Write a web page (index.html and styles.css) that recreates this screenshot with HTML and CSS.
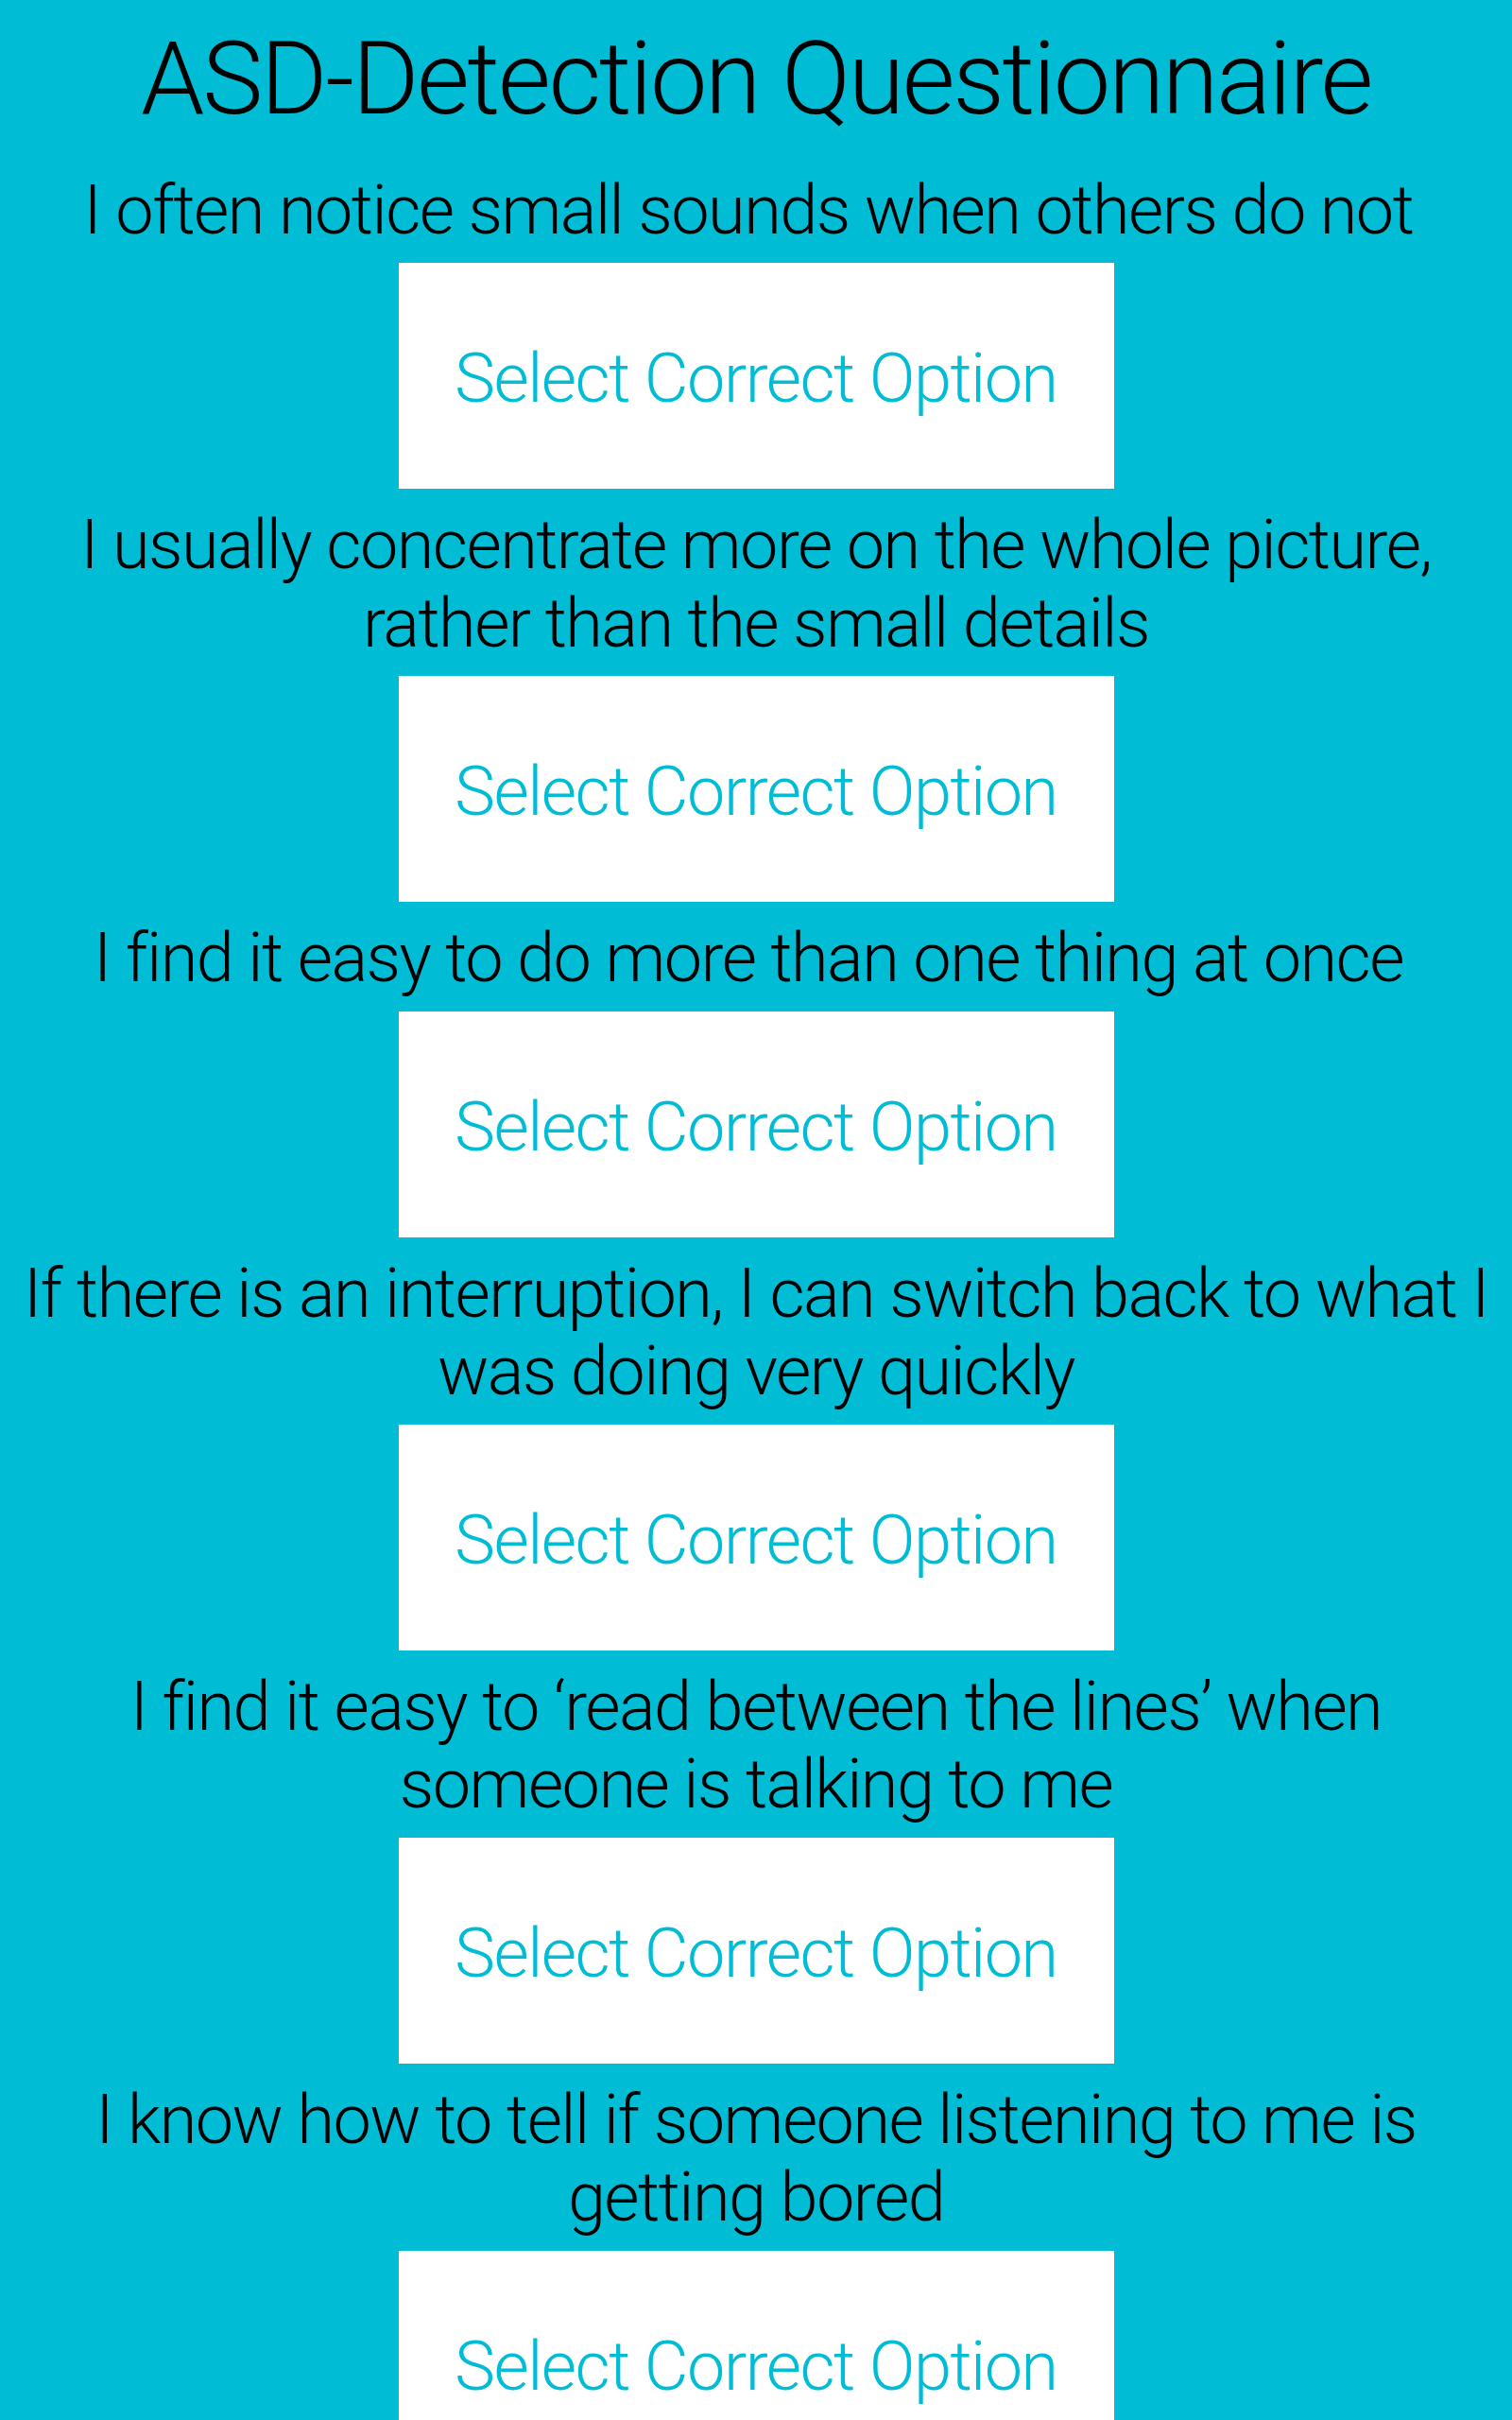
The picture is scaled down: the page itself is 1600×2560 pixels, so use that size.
FILE: index.html
```html
<!DOCTYPE html>
<html lang="en">
<head>
<meta charset="utf-8">
<title>ASD-Detection Questionnaire</title>
<link rel="stylesheet" href="styles.css">
</head>
<body>
<main class="page">
  <h1 class="title">ASD-Detection Questionnaire</h1>
  <section class="item">
    <p class="question">I often notice small sounds when others do not&nbsp;</p>
    <button class="select">Select Correct Option</button>
  </section>
  <section class="item">
    <p class="question">I usually concentrate more on the whole picture, rather than the small details</p>
    <button class="select">Select Correct Option</button>
  </section>
  <section class="item">
    <p class="question">I find it easy to do more than one thing at once&nbsp;</p>
    <button class="select">Select Correct Option</button>
  </section>
  <section class="item">
    <p class="question">If there is an interruption, I can switch back to what I was doing very quickly</p>
    <button class="select">Select Correct Option</button>
  </section>
  <section class="item">
    <p class="question">I find it easy to ‘read between the lines’ when someone is talking to me</p>
    <button class="select">Select Correct Option</button>
  </section>
  <section class="item">
    <p class="question">I know how to tell if someone listening to me is getting bored</p>
    <button class="select">Select Correct Option</button>
  </section>
</main>
</body>
</html>
```
FILE: styles.css
```css
html, body {
  margin: 0;
  padding: 0;
  background: #00bcd4;
}
body {
  font-family: "Roboto Light", Roboto, "Noto Sans", "Liberation Sans", sans-serif;
  font-weight: 300;
  color: #000;
}
.page {
  display: flex;
  flex-direction: column;
  align-items: center;
  padding: 22px 8px 0;
}
.title {
  margin: 0;
  font-size: 108px;
  font-weight: 300;
  line-height: 123.75px;
  letter-spacing: -0.022em;
  text-align: center;
}
.item {
  display: flex;
  flex-direction: column;
  align-items: center;
  width: 100%;
}
.question {
  margin: 19px 0 14px;
  font-size: 72px;
  line-height: 82.5px;
  letter-spacing: -0.021em;
  text-align: center;
}
.item:first-of-type .question {
  margin-top: 36px;
}
.select {
  box-sizing: border-box;
  width: 757px;
  height: 239px;
  border: 0;
  padding: 6px 0 0;
  background: #fff;
  color: #00bcd4;
  font-family: "Roboto Light", Roboto, "Noto Sans", "Liberation Sans", sans-serif;
  font-weight: 300;
  font-size: 72px;
  letter-spacing: -0.021em;
  display: flex;
  align-items: center;
  justify-content: center;
}
```
